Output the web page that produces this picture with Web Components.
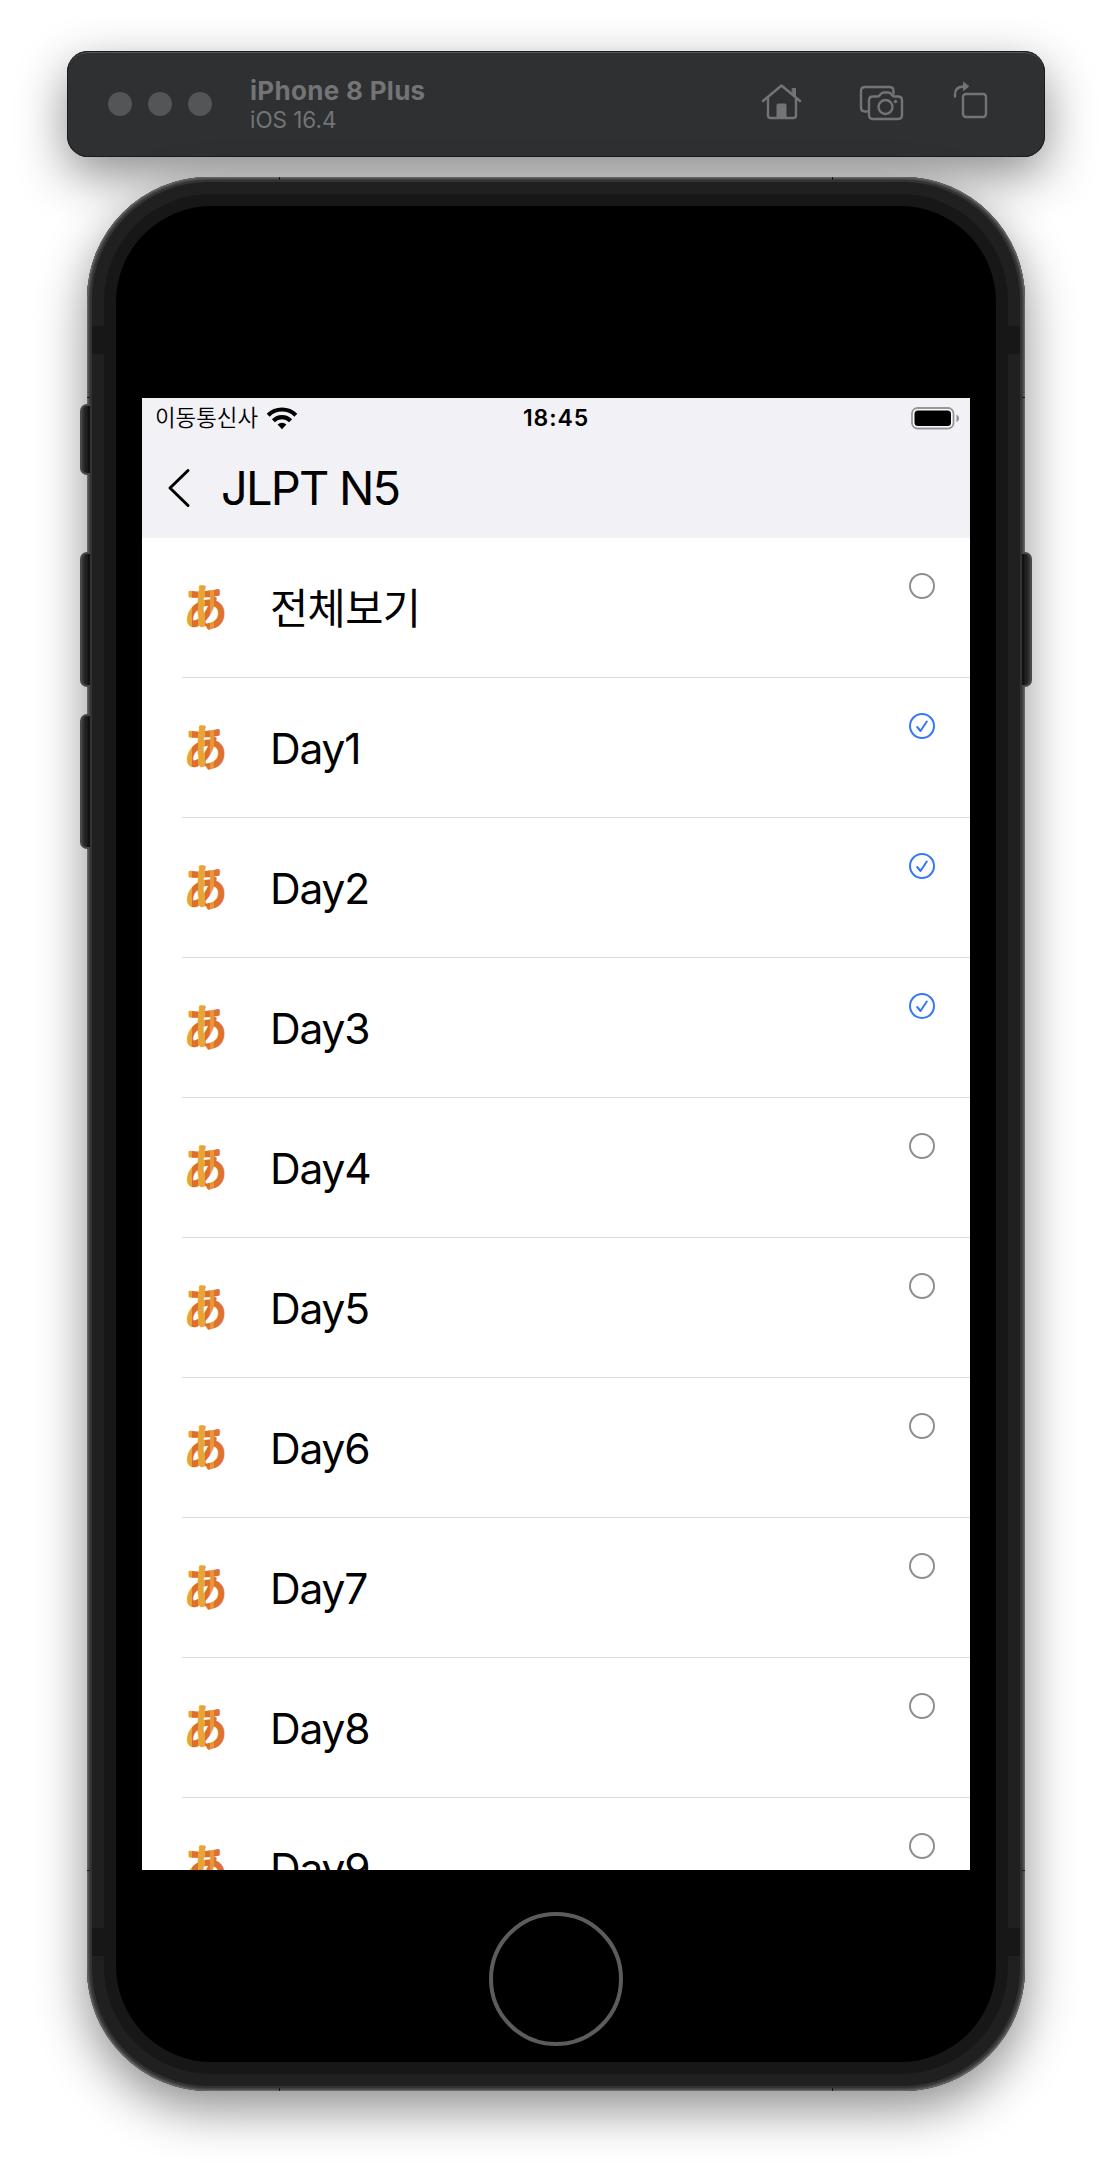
<!DOCTYPE html>
<html lang="ko">
<head>
<meta charset="utf-8">
<title>Simulator</title>
<style>
html,body{margin:0;background:#fff}
body{width:1112px;height:2176px;overflow:hidden;font-family:Inter,"Noto Sans CJK KR",sans-serif}
</style>
</head>
<body>
<simulator-desk>
  <sim-toolbar device="iPhone 8 Plus" os="iOS 16.4"></sim-toolbar>
  <phone-frame>
    <status-bar carrier="이동통신사" time="18:45"></status-bar>
    <nav-header>JLPT N5</nav-header>
    <day-list>
      <day-row lang="ko" class="ko">전체보기</day-row>
      <day-row checked>Day1</day-row>
      <day-row checked>Day2</day-row>
      <day-row checked>Day3</day-row>
      <day-row>Day4</day-row>
      <day-row>Day5</day-row>
      <day-row>Day6</day-row>
      <day-row>Day7</day-row>
      <day-row>Day8</day-row>
      <day-row>Day9</day-row>
    </day-list>
  </phone-frame>
</simulator-desk>
<script>
const define = (name, render) => customElements.define(name, class extends HTMLElement {
  constructor() {
    super();
    this.attachShadow({mode: 'open'}).innerHTML = render(this);
  }
});

define('simulator-desk', () => `
<style>
:host{display:flex;flex-direction:column;align-items:center;gap:20px;box-sizing:border-box;width:1112px;height:2176px;padding-top:51px;background:#fff}
</style><slot></slot>`);

define('sim-toolbar', el => `
<style>
:host{display:flex;align-items:center;box-sizing:border-box;flex:none;width:978px;height:106px;padding:0 41px;border-radius:21px;background:#2f3032;color:#737476;
box-shadow:inset 0 0 0 1px #1b1b1d,inset 0 2px 0 0 #55565a,0 18px 50px rgba(0,0,0,.45)}
.dots{display:flex;gap:16px}
.dots i{width:24px;height:24px;border-radius:50%;background:#545557}
.name{display:flex;flex-direction:column;margin-left:38px;flex:1;padding-top:2px}
b{font-size:26px;line-height:30px;font-weight:700;letter-spacing:.3px;white-space:nowrap}
span{font-size:22.500px;line-height:28px;letter-spacing:-.05px;white-space:nowrap}
svg{display:block;flex:none;fill:none;stroke:#737476;stroke-width:2.400;stroke-linecap:round;stroke-linejoin:round}
</style>
<div class="dots"><i></i><i></i><i></i></div>
<div class="name"><b>${el.getAttribute('device')}</b><span>${el.getAttribute('os')}</span></div>
<svg width="248" height="50" viewBox="756 79 248 50">
  <path d="M763 101 781.500 85.500 800 101M768 98V115.500Q768 118 770.500 118H793.500Q796 118 796 115.500V98"/>
  <path d="M777 118V105Q777 104 778 104H785Q786 104 786 105V118ZM792.500 88.500H795.500V97L792.500 94.500Z" fill="#737476" stroke-width="1"/>
  <path d="M867 111.500H865Q861 111.500 861 107.500V91Q861 87 865 87H889.500Q893.500 87 893.500 91V93.500"/>
  <path d="M873 96.500H877.500Q879 96.500 880 95L881 93.800Q882 92.500 884 92.500H888Q890 92.500 891 93.800L892 95Q893 96.500 894.500 96.500H898Q902 96.500 902 100.500V115Q902 119 898 119H873Q869 119 869 115V100.500Q869 96.500 873 96.500Z"/>
  <circle cx="885.500" cy="107" r="7"/><circle cx="895.500" cy="101.500" r="1.700" fill="#737476" stroke="none"/>
  <rect x="963" y="94" width="23" height="23" rx="3"/>
  <path d="M955 96.500V94.500Q955 86.500 964 86.500"/><path d="M963.500 82.500V90.500L968.500 86.500Z" fill="#737476" stroke-width="1"/>
</svg>`);

define('phone-frame', () => `
<style>
:host{display:block;position:relative;flex:none;width:938px;height:1914px;border-radius:122px;box-shadow:0 18px 50px rgba(0,0,0,.45)}
.edge{position:relative;box-sizing:border-box;height:1914px;padding:5px;border-radius:122px;background:#333;
box-shadow:inset 0 0 0 1px #666,inset 0 0 0 2px #505050,inset 0 0 0 3px #414141}
.band{box-sizing:border-box;height:1904px;padding:12px;border-radius:117px;
background:linear-gradient(#0000 144px,#171717 144px 172px,#0000 172px 1746px,#171717 1746px 1774px,#0000 1774px),#202020}
.rim{box-sizing:border-box;height:1880px;padding:12px;border-radius:107px;background:#171717}
.glass{display:flex;flex-direction:column;align-items:center;box-sizing:border-box;height:1856px;padding-top:192px;border-radius:96px;background:#000}
.screen{display:flex;flex-direction:column;flex:none;width:828px;height:1472px;overflow:hidden;background:#fff;color:#000}
.home{flex:none;box-sizing:border-box;width:134px;height:134px;margin-top:42px;border:4px solid #5c5c5c;border-radius:50%}
.key{position:absolute;z-index:1;left:-7px;width:10px;box-sizing:border-box;border:2px solid #484848;border-right:0;border-radius:7px 0 0 7px;background:linear-gradient(90deg,#363636 1px,#202020 3px 5px,#111 6px)}
.k1{top:227px;height:71px}.k2{top:375px;height:135px}.k3{top:537px;height:135px}
.k4{left:auto;right:-7px;top:375px;height:135px;transform:scaleX(-1)}
.tick{position:absolute;background:#161616}
.v{width:1px;height:3px}.h{width:3px;height:1px}
</style>
<div class="key k1"></div><div class="key k2"></div><div class="key k3"></div><div class="key k4"></div>
<div class="edge"><div class="band"><div class="rim"><div class="glass">
<div class="screen"><slot></slot></div><div class="home"></div>
</div></div></div></div>
<i class="tick v" style="left:192px;top:0"></i><i class="tick v" style="right:192px;top:0"></i>
<i class="tick v" style="left:192px;bottom:0"></i><i class="tick v" style="right:192px;bottom:0"></i>
<i class="tick h" style="left:0;top:220px"></i><i class="tick h" style="right:0;top:220px"></i>
<i class="tick h" style="left:0;top:1693px"></i><i class="tick h" style="right:0;top:1693px"></i>`);

define('status-bar', el => `
<style>
:host{display:grid;grid-template-columns:1fr auto 1fr;align-items:center;box-sizing:border-box;flex:none;height:40px;padding:0 10px 0 13px;background:#f2f1f6}
.left{display:flex;align-items:center;gap:8px}
.carrier{font:350 22.400px/36px "Noto Sans CJK KR",sans-serif;white-space:nowrap;padding-bottom:4px}
.time{font-size:23px;font-weight:600;letter-spacing:.9px;line-height:39px;padding-top:1px;margin-right:3px}
svg{display:block}.batt{justify-self:end}
</style>
<div class="left"><span class="carrier">${el.getAttribute('carrier')}</span>
<svg width="32" height="24" viewBox="0 0 32 24"><g fill="none" stroke="#000" stroke-width="4.200"><path d="M2.200 9.200A19.500 19.500 0 0 1 29.800 9.200"/><path d="M7.400 14.700A12 12 0 0 1 24.600 14.700"/></g><path d="M11.600 18.600A6.400 6.400 0 0 1 20.400 18.600L16 23.300Z"/></svg></div>
<span class="time">${el.getAttribute('time')}</span>
<svg class="batt" width="50" height="24" viewBox="0 0 50 24"><rect x="2" y="2" width="41.500" height="20.500" rx="5.500" fill="#fff" fill-opacity=".6" stroke="#97969a" stroke-width="1.800"/><rect x="4.500" y="4.500" width="36.500" height="15.500" rx="3.500"/><path d="M46.500 8.500Q49 9.500 49 12.250T46.500 16Z" fill="#8e8e93"/></svg>`);

define('nav-header', () => `
<style>
:host{display:flex;align-items:center;box-sizing:border-box;flex:none;height:100px;padding:0 0 0 24px;background:#f2f1f6;font-size:47px;letter-spacing:-1.800px;line-height:100px}
svg{display:block;margin-right:28px}
span{white-space:nowrap}
</style>
<svg width="27" height="44" viewBox="0 0 27 44" fill="none" stroke="#000" stroke-width="3" stroke-linecap="round" stroke-linejoin="round"><path d="M22 4.500 4 22 22 39.500"/></svg>
<span><slot></slot></span>`);

define('day-list', () => `
<style>:host{display:block;flex:none;background:#fff}</style><slot></slot>`);

define('day-row', el => `
<style>
:host{display:flex;align-items:stretch;height:140px;padding-left:40px;font-size:42.500px;letter-spacing:-1.200px}
:host(.ko){font-family:"Noto Sans CJK KR",sans-serif;font-size:41.500px;letter-spacing:-.6px}
.cell{display:flex;align-items:center;flex:1;box-sizing:border-box;border-bottom:1px solid #dcdcde;padding-right:35px}
.kana{display:block;flex:none;margin-right:40px;overflow:visible}
.label{flex:1;line-height:138px;padding-top:2px;white-space:nowrap}
:host(.ko) .label{padding:0 0 3px;line-height:136px}
.state{display:block;flex:none;align-self:flex-start;margin-top:35px}
</style>
<div class="cell">
<svg class="kana" width="48" height="70" viewBox="0 -9 48 70">
<defs>
<linearGradient id="g" gradientUnits="userSpaceOnUse" x1="-20" y1="0" x2="20" y2="0">
<stop offset=".18" stop-color="#e8a438"/><stop offset=".18" stop-color="#dd6e2c"/><stop offset=".32" stop-color="#dd6e2c"/><stop offset=".32" stop-color="#e7a437"/><stop offset=".48" stop-color="#e7a437"/><stop offset=".48" stop-color="#dd6e2c"/><stop offset=".62" stop-color="#df732c"/><stop offset=".62" stop-color="#e8963a"/><stop offset=".72" stop-color="#e8963a"/><stop offset=".72" stop-color="#df732c"/></linearGradient></defs>
<text transform="translate(23.500 25) scale(1.020 1.120)" x="0" y="16.200" text-anchor="middle" font-family="Noto Sans CJK JP, sans-serif" font-weight="400" font-size="42.500" letter-spacing="0" fill="url(#g)" stroke="url(#g)" stroke-width="2.800" stroke-linejoin="round" stroke-linecap="round">あ</text></svg>
<span class="label"><slot></slot></span>
<svg class="state" width="26" height="26" viewBox="0 0 26 26" fill="none" stroke-width="2">${el.hasAttribute('checked')
? '<circle cx="13" cy="13" r="12" stroke="#3478f6"/><path d="M8.200 14 11.500 18 17.800 8.500" stroke="#3478f6" stroke-linecap="round" stroke-linejoin="round"/>'
: '<circle cx="13" cy="13" r="12" stroke="#8e8e93"/>'}</svg>
</div>`);
</script>
</body>
</html>
